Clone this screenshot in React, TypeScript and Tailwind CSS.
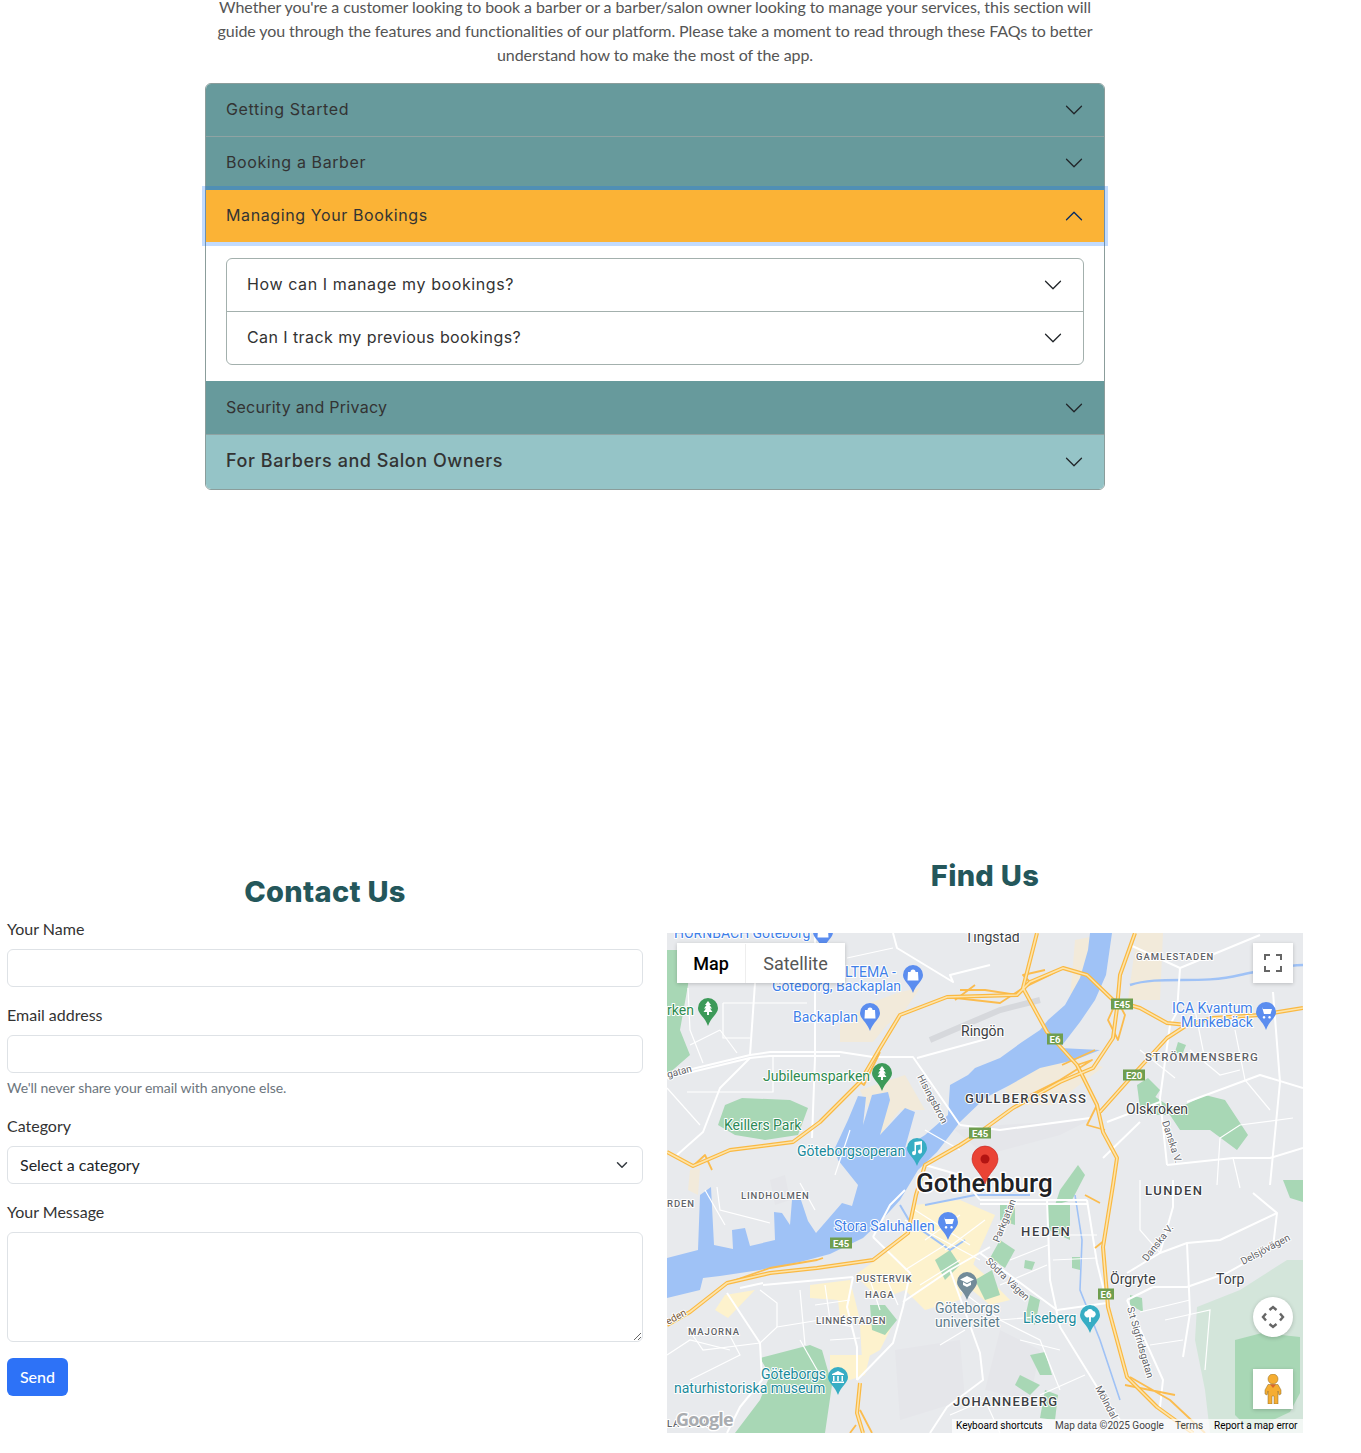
const headFont = "font-['Inter',sans-serif]";

function Chevron({ up, color = "#212529" }: { up?: boolean; color?: string }) {
  return (
    <svg width="20" height="20" viewBox="0 0 16 16" fill={color} className={up ? "shrink-0 rotate-180" : "shrink-0"}>
      <path fillRule="evenodd" d="M1.646 4.646a.5.5 0 0 1 .708 0L8 10.293l5.646-5.647a.5.5 0 0 1 .708.708l-6 6a.5.5 0 0 1-.708 0l-6-6a.5.5 0 0 1 0-.708z" />
    </svg>
  );
}

function Title({ children }: { children: React.ReactNode }) {
  return <span className={`${headFont} -mt-[2px] text-base tracking-[0.6px] text-[#333]`}>{children}</span>;
}

function Faq() {
  return (
    <div className="w-[900px] rounded-[6px] border border-[#8b9d9b] bg-white">
      <div className="flex h-[53px] items-center justify-between rounded-t-[5px] border-b border-[#8fa3a3] bg-[#679a9c] pl-5 pr-5">
        <Title>Getting Started</Title>
        <Chevron />
      </div>
      <div className="flex h-[53px] items-center justify-between bg-[#679a9c] pb-[2px] pl-5 pr-5">
        <Title>Booking a Barber</Title>
        <Chevron />
      </div>
      <div className="relative z-10 flex h-[52px] items-center justify-between bg-[#fbb336] pl-5 pr-5 shadow-[0_0_0_4px_rgba(13,110,253,0.25)]">
        <Title>Managing Your Bookings</Title>
        <Chevron up color="#052c65" />
      </div>
      <div className="px-5 py-4">
        <div className="rounded-[6px] border border-[#a3b0ad]">
          <div className="flex h-[53px] items-center justify-between border-b border-[#a3b0ad] pl-5 pr-5">
            <Title>How can I manage my bookings?</Title>
            <Chevron />
          </div>
          <div className="flex h-[52px] items-center justify-between pl-5 pr-5">
            <span className={`${headFont} -mt-[2px] text-base tracking-[0.42px] text-[#333]`}>Can I track my previous bookings?</span>
            <Chevron />
          </div>
        </div>
      </div>
      <div className="flex h-[54px] items-center justify-between border-b border-[#8fa3a3] bg-[#679a9c] pl-5 pr-5">
        <span className={`${headFont} -mt-[2px] text-base tracking-[0.25px] text-[#333]`}>Security and Privacy</span>
        <Chevron />
      </div>
      <div className="flex h-[54px] items-center justify-between rounded-b-[5px] bg-[#95c4c7] pl-5 pr-5">
        <span className={`${headFont} -mt-[2px] text-lg font-medium tracking-[0.55px] text-[#333]`}>For Barbers and Salon Owners</span>
        <Chevron />
      </div>
    </div>
  );
}

function Field({ label, children, help }: { label: string; children: React.ReactNode; help?: string }) {
  return (
    <div className="mb-4">
      <label className="mb-2 block text-base leading-6 text-[#333]">{label}</label>
      {children}
      {help && <div className="mt-1 text-sm leading-[21px] tracking-[-0.05px] text-[#6c757d]">{help}</div>}
    </div>
  );
}

function ContactForm() {
  return (
    <div className="mt-4">
      <h2 className={`${headFont} mb-[5px] text-center text-[29px] leading-10 font-extrabold tracking-[0.3px] text-[#24575b]`}>Contact Us</h2>
      <form>
        <Field label="Your Name">
          <input className="block h-[38px] w-full rounded-[6px] border border-[#dee2e6] bg-white" />
        </Field>
        <Field label="Email address" help="We'll never share your email with anyone else.">
          <input className="block h-[38px] w-full rounded-[6px] border border-[#dee2e6] bg-white" />
        </Field>
        <Field label="Category">
          <div className="flex h-[38px] items-center justify-between rounded-[6px] border border-[#dee2e6] bg-white pl-3 pr-3 text-base text-[#212529]">
            <span>Select a category</span>
            <svg width="16" height="12" viewBox="0 0 16 16" fill="none" stroke="#343a40" strokeWidth="2" strokeLinecap="round" strokeLinejoin="round">
              <path d="m2 5 6 6 6-6" />
            </svg>
          </div>
        </Field>
        <Field label="Your Message">
          <textarea className="block h-[110px] w-full rounded-[6px] border border-[#dee2e6] bg-white" />
        </Field>
        <button type="button" className="h-[38px] w-[61px] rounded-[6px] bg-[#2d72f7] text-base font-medium text-white">Send</button>
      </form>
    </div>
  );
}

const water = "M667 1258 L698 1250 L700 1195 L711 1187 L714 1245 L733 1249 L732 1230 L745 1228 L750 1246 L775 1240 L774 1212 L782 1213 L790 1225 L792 1200 L801 1200 L808 1221 L816 1233 L842 1203 L852 1206 L858 1185 L838 1160 L835 1148 L848 1120 L858 1096 L866 1097 L863 1125 L872 1095 L888 1092 L890 1100 L880 1135 L905 1108 L915 1112 L905 1148 L925 1135 L948 1115 L950 1085 L968 1075 L975 1068 L1000 1058 L1022 1042 L1040 1030 L1048 1020 L1065 1005 L1080 978 L1088 950 L1090 933 L1112 933 L1106 975 L1095 1000 L1080 1022 L1060 1048 L1100 1050 L1075 1060 L1040 1068 L1010 1085 L985 1098 L960 1122 L937 1152 L918 1170 L900 1200 L880 1222 L863 1238 L830 1254 L800 1262 L760 1270 L720 1276 L703 1278 L700 1290 L667 1298 Z";

const beige = [
  "M840 1025 L870 1003 L900 992 L920 988 L905 1010 L887 1025 L873 1042 L840 1042 Z",
  "M860 1090 L905 1075 L925 1110 L900 1110 L880 1135 Z",
  "M1137 933 L1163 933 L1160 1000 L1128 1000 Z",
  "M1075 940 L1095 936 L1085 985 L1070 1000 Z",
  "M1023 1068 L1070 1058 L1103 1067 L1053 1105 L1015 1105 L1005 1090 Z",
  "M690 1170 L700 1168 L698 1195 L688 1190 Z",
];

const yellow = [
  "M915 1205 L960 1200 L995 1215 L975 1260 L960 1300 L925 1310 L905 1290 L880 1300 L855 1275 L890 1250 L905 1230 Z",
  "M810 1285 L850 1280 L860 1320 L840 1318 L838 1300 L810 1298 Z",
  "M725 1295 L755 1290 L728 1318 L715 1310 Z",
  "M830 1355 L870 1355 L865 1375 L850 1380 L830 1375 Z",
  "M860 1325 L895 1320 L880 1350 L862 1360 Z",
  "M963 1255 L985 1275 L1010 1300 L990 1305 L960 1280 Z",
];

const blocks = [
  "M1000 1330 L1040 1350 L1030 1400 L985 1390 Z",
  "M895 1350 L960 1340 L965 1400 L900 1420 Z",
  "M955 1130 L1000 1125 L1090 1120 L1060 1135 L985 1155 Z",
  "M770 1180 L785 1175 L790 1200 L775 1205 Z",
];

const green = [
  "M667 950 L690 950 L688 985 L680 1030 L690 1055 L667 1075 Z",
  "M725 1105 L742 1098 L790 1100 L808 1108 L798 1135 L765 1140 L735 1135 L718 1125 Z",
  "M1145 1090 L1175 1110 L1205 1095 L1225 1100 L1248 1135 L1237 1150 L1210 1130 L1180 1130 L1170 1115 L1145 1115 Z",
  "M1137 1085 L1148 1078 L1160 1090 L1150 1105 L1140 1108 Z",
  "M1060 1190 L1078 1165 L1085 1175 L1072 1200 L1055 1205 Z",
  "M1048 1205 L1070 1205 L1070 1240 L1048 1230 Z",
  "M1000 1205 L1015 1205 L1015 1225 L1000 1220 Z",
  "M1025 1260 L1035 1262 L1032 1270 L1024 1268 Z",
  "M1072 1257 L1080 1257 L1080 1270 L1072 1268 Z",
  "M1000 1240 L1015 1250 L1005 1268 L990 1258 Z",
  "M935 1260 L950 1250 L960 1265 L945 1280 Z",
  "M1283 1180 L1303 1180 L1303 1202 L1290 1198 Z",
  "M760 1358 L810 1345 L822 1350 L832 1385 L825 1433 L735 1433 L760 1400 L770 1375 Z",
  "M870 1305 L885 1305 L897 1320 L885 1335 L872 1330 Z",
  "M1030 1355 L1045 1352 L1052 1375 L1040 1375 Z",
  "M1020 1375 L1040 1385 L1030 1395 L1015 1385 Z",
  "M1235 1340 L1262 1333 L1300 1337 L1300 1393 L1290 1412 L1273 1420 L1250 1430 L1235 1415 Z",
  "M1030 1295 L1040 1300 L1035 1325 L1025 1318 Z",
  "M1130 1295 L1142 1298 L1143 1312 L1130 1305 Z",
  "M1045 1390 L1058 1395 L1055 1420 L1040 1418 Z",
  "M1178 1042 L1186 1045 L1182 1055 L1175 1052 Z",
  "M975 1280 L992 1270 L1000 1295 L985 1300 Z",
];

const paleGreen = [
  "M1197 1307 L1240 1290 L1287 1260 L1303 1260 L1303 1433 L1210 1433 L1205 1390 L1195 1340 Z",
];

const roads = [
  "M667 1075 L750 1055 L770 1052 L840 1052 L873 1057 L913 1057 L960 1125",
  "M667 1078 L750 1058 L770 1056 L840 1056",
  "M750 1055 L755 983",
  "M815 933 L815 1058 L812 1138",
  "M750 1058 L720 1088 L703 1132 L677 1155",
  "M893 933 L897 948 L953 982 L950 975 L990 965",
  "M917 1058 L990 1038",
  "M1130 945 L1180 968 L1260 935",
  "M1180 968 L1177 1012 L1170 1025 L1160 1098 L1167 1165",
  "M1273 992 L1280 1082 L1270 1185",
  "M1187 1102 L1260 1075 L1303 1088",
  "M1107 1122 L1160 1102",
  "M1140 1122 L1103 1158",
  "M1167 1165 L1233 1158 L1270 1158 L1303 1148",
  "M1047 1200 L1050 1280 L1060 1327 L1097 1387 L1120 1420",
  "M980 1200 L1087 1200",
  "M980 1204 L1087 1204",
  "M1087 1200 L1097 1263 L1107 1303",
  "M980 1253 L1057 1310 L1107 1303",
  "M1153 1287 L1187 1287 L1227 1273 L1273 1247 L1277 1213 L1253 1193",
  "M1127 1300 L1153 1287",
  "M1127 1273 L1160 1253 L1173 1207 L1173 1180",
  "M1160 1253 L1187 1243 L1220 1240 L1277 1213",
  "M1187 1243 L1190 1313 L1183 1357",
  "M1127 1300 L1163 1380 L1160 1407",
  "M727 1293 L760 1343 L762 1380 L740 1407 L727 1433",
  "M763 1285 L853 1277",
  "M740 1288 L763 1283",
  "M853 1277 L847 1307 L857 1347 L857 1380",
  "M857 1380 L893 1343 L903 1307 L910 1273 L873 1237",
  "M903 1302 L950 1270 L990 1247",
  "M950 1270 L980 1353 L983 1380 L947 1407 L930 1433",
  "M980 1200 L960 1175 L925 1165",
  "M873 1237 L890 1205 L905 1190",
  "M960 1125 L1000 1130 L1090 1118",
];

const thinRoads = [
  "M688 988 L690 1030 L703 1063",
  "M720 1030 L737 1053",
  "M720 1030 L690 1045",
  "M723 1003 L807 1003",
  "M723 1003 L723 1038 L750 1038",
  "M667 1088 L700 1125",
  "M687 1092 L773 1092 L773 1056",
  "M847 958 L893 948",
  "M1140 1050 L1175 1078",
  "M1190 1050 L1220 1075 L1240 1070",
  "M1195 1010 L1205 1060",
  "M1235 1030 L1245 1080 L1270 1110",
  "M1293 1118 L1240 1125 L1220 1138 L1217 1185",
  "M1233 1158 L1240 1188",
  "M717 1187 L720 1210 L770 1223",
  "M777 1327 L777 1303 L760 1290",
  "M760 1343 L777 1327 L820 1320 L853 1327",
  "M687 1327 L703 1350 L760 1343",
  "M800 1290 L805 1345",
  "M825 1285 L830 1320",
  "M815 1305 L850 1300",
  "M830 1340 L860 1338",
  "M870 1280 L880 1310 M885 1275 L898 1305",
  "M905 1220 L980 1260 M915 1210 L970 1245",
  "M925 1240 L960 1215 M945 1250 L985 1220",
  "M920 1285 L960 1260 M905 1270 L945 1245",
  "M960 1290 L1000 1320 L1060 1315",
  "M1000 1320 L1040 1340 L1060 1390",
  "M1010 1260 L1048 1245",
  "M1000 1285 L1047 1265",
  "M1060 1235 L1097 1235",
  "M1053 1260 L1097 1258",
  "M1140 1180 L1140 1230 L1160 1253",
  "M1140 1312 L1190 1300",
  "M1165 1320 L1210 1310 L1205 1370",
  "M1040 1395 L1085 1375",
  "M1150 1345 L1183 1340",
  "M950 1415 L985 1400 L1000 1433",
  "M1020 1340 L1060 1350",
  "M940 1345 L965 1330",
  "M667 1355 L690 1340 L730 1350",
  "M690 1380 L740 1355 L727 1330",
  "M800 1340 L820 1375",
  "M705 1190 L725 1225",
  "M800 1183 L815 1210",
  "M850 1130 L835 1175",
  "M925 1130 L960 1150",
];

const highways = [
  "M667 1152 L693 1166 L730 1150 L793 1142 L820 1122 L860 1082 L880 1048 L900 1015 L947 997 L1017 995 L1030 982 L1063 968 L1087 975 L1113 1000 L1140 1008 L1167 1023 L1187 1025 L1213 1018 L1260 1015 L1303 1008",
  "M1037 933 L1023 988 L1047 1032 L1077 1065 L1097 1105 L1103 1132 L1117 1158 L1113 1185 L1103 1247 L1108 1307 L1127 1377 L1157 1407 L1193 1433",
  "M1135 933 L1120 975 L1117 1008 L1113 1038 L1093 1068 L1060 1082 L1013 1108 L980 1132 L960 1145 L925 1165 L916 1195 L908 1233 L873 1260 L817 1268 L770 1273 L727 1283 L690 1312 L667 1325",
  "M1100 1112 L1133 1075 L1167 1038 L1187 1025",
  "M860 1383 L857 1413 L863 1433",
];

const ramps = [
  "M727 1283 L770 1268 L817 1260 L823 1258",
  "M947 997 L1000 1003 L1023 988 L1050 975 L1063 968",
  "M960 990 L985 990 L1017 995 M955 1000 L975 985",
  "M1030 982 L1023 975 L1045 970",
  "M1117 1000 L1108 1020 L1118 1040 L1125 1015 L1117 1000",
  "M1077 1065 L1092 1060 L1060 1080 L1030 1095 M1062 1065 L1095 1050",
  "M1097 1105 L1087 1125 L1105 1130",
  "M1130 1377 L1170 1400 L1205 1433 M1125 1385 L1175 1395",
  "M1100 1203 L1085 1195 M1105 1240 L1095 1248",
  "M860 1082 L864 1085 L880 1052 M693 1166 L705 1155 L712 1170",
  "M860 1410 L872 1433 M856 1425 L850 1433",
];

const shields = [
  { label: "E45", x: 1122, y: 1004, w: 22 },
  { label: "E6", x: 1055, y: 1039, w: 16 },
  { label: "E20", x: 1134, y: 1075, w: 22 },
  { label: "E45", x: 980, y: 1133, w: 22 },
  { label: "E45", x: 841, y: 1243, w: 22 },
  { label: "E6", x: 1106, y: 1294, w: 16 },
];

const BLUE = "#3f7fe8";
const GREEN = "#2e8b4f";
const TEAL = "#1a8a9b";
const GREY = "#5f6368";
const DARK = "#3c4043";

type Label = { t: string; x: number; y: number; c: string; s?: number; w?: number; ls?: number; r?: number };

const labels: Label[] = [
  { t: "HORNBACH Göteborg", x: 674, y: 938, c: BLUE, s: 14 },
  { t: "Tingstad", x: 965, y: 942, c: DARK, s: 14 },
  { t: "GAMLESTADEN", x: 1136, y: 960, c: GREY, s: 9.5, w: 500, ls: 1 },
  { t: "LTEMA -", x: 845, y: 977, c: BLUE, s: 14 },
  { t: "Göteborg, Backaplan", x: 772, y: 991, c: BLUE, s: 14 },
  { t: "rken", x: 667, y: 1015, c: GREEN, s: 14 },
  { t: "Backaplan", x: 793, y: 1022, c: BLUE, s: 14 },
  { t: "Ringön", x: 961, y: 1036, c: DARK, s: 14 },
  { t: "ICA Kvantum", x: 1172, y: 1013, c: BLUE, s: 14 },
  { t: "Munkebäck", x: 1181, y: 1027, c: BLUE, s: 14 },
  { t: "STRÖMMENSBERG", x: 1145, y: 1061, c: GREY, s: 11.5, w: 500, ls: 1.1 },
  { t: "gatan", x: 668, y: 1078, c: GREY, s: 10, r: -15 },
  { t: "Jubileumsparken", x: 763, y: 1081, c: GREEN, s: 14 },
  { t: "Hisingsbron", x: 917, y: 1077, c: GREY, s: 10, r: 62 },
  { t: "GULLBERGSVASS", x: 965, y: 1103, c: DARK, s: 13, w: 500, ls: 1.4 },
  { t: "Olskroken", x: 1126, y: 1114, c: DARK, s: 14 },
  { t: "Keillers Park", x: 724, y: 1130, c: "#2d8a57", s: 14 },
  { t: "Göteborgsoperan", x: 797, y: 1156, c: TEAL, s: 14 },
  { t: "Danska V.", x: 1162, y: 1122, c: GREY, s: 10, r: 72 },
  { t: "LUNDEN", x: 1145, y: 1195, c: DARK, s: 13, w: 500, ls: 1.5 },
  { t: "LINDHOLMEN", x: 741, y: 1199, c: GREY, s: 9.5, w: 500, ls: 0.9 },
  { t: "RDEN", x: 667, y: 1207, c: GREY, s: 9.5, w: 500, ls: 0.9 },
  { t: "Stora Saluhallen", x: 834, y: 1231, c: BLUE, s: 14 },
  { t: "HEDEN", x: 1021, y: 1236, c: DARK, s: 13, w: 500, ls: 1.8 },
  { t: "Parkgatan", x: 999, y: 1243, c: GREY, s: 10, r: -68 },
  { t: "Danska V.", x: 1147, y: 1262, c: GREY, s: 10, r: -52 },
  { t: "Delsjövägen", x: 1243, y: 1265, c: GREY, s: 10, r: -28 },
  { t: "PUSTERVIK", x: 856, y: 1282, c: GREY, s: 9.5, w: 500, ls: 0.7 },
  { t: "Södra Vägen", x: 985, y: 1262, c: GREY, s: 10, r: 44 },
  { t: "Örgryte", x: 1110, y: 1284, c: DARK, s: 14 },
  { t: "Torp", x: 1216, y: 1284, c: DARK, s: 14 },
  { t: "HAGA", x: 865, y: 1298, c: GREY, s: 9.5, w: 500, ls: 0.9 },
  { t: "Göteborgs", x: 935, y: 1313, c: "#5f7d8c", s: 14 },
  { t: "universitet", x: 935, y: 1327, c: "#5f7d8c", s: 14 },
  { t: "Liseberg", x: 1023, y: 1323, c: TEAL, s: 14 },
  { t: "S:t Sigfridsgatan", x: 1127, y: 1308, c: GREY, s: 10, r: 74 },
  { t: "LINNÉSTADEN", x: 816, y: 1324, c: GREY, s: 9.5, w: 500, ls: 0.7 },
  { t: "MAJORNA", x: 688, y: 1335, c: GREY, s: 9.5, w: 500, ls: 0.9 },
  { t: "eden", x: 668, y: 1325, c: "#7a5a3a", s: 10, r: -28 },
  { t: "Göteborgs", x: 761, y: 1379, c: TEAL, s: 14 },
  { t: "naturhistoriska museum", x: 674, y: 1393, c: TEAL, s: 14 },
  { t: "JOHANNEBERG", x: 953, y: 1406, c: DARK, s: 13, w: 500, ls: 1.15 },
  { t: "Mölndal", x: 1095, y: 1388, c: GREY, s: 10, r: 62 },
  { t: "LADUGÅRD", x: 667, y: 1427, c: GREY, s: 9.5, w: 500, ls: 0.9 },
];

const tree = "M0 -7 L-3 -3 L-1.5 -3 L-4 0.5 L-2 0.5 L-4.5 4 L-1 4 L-1 7 L1 7 L1 4 L4.5 4 L2 0.5 L4 0.5 L1.5 -3 L3 -3 Z";
const bag = "M-5 -3 L-2.5 -3 a2.5 2.5 0 0 1 5 0 L5 -3 L5.5 5.5 L-5.5 5.5 Z";
const cart = "M-6 -5 L-4 -5 L-3 -3 L6 -3 L4.5 2 L-2 2 L-4 -5 Z M-2 4 a1.3 1.3 0 1 0 0.1 0 Z M3.5 4 a1.3 1.3 0 1 0 0.1 0 Z";
const note = "M-2.5 -6 L5 -7 L5 3.5 a2 2 0 1 1 -1.5 -1.8 L3.5 -3.5 L-1 -2.8 L-1 5 a2 2 0 1 1 -1.5 -1.8 Z";
const cap = "M0 -6 L7 -2.5 L0 1 L-7 -2.5 Z M-4 0 L0 2.2 L4 0 L4 3 L0 5 L-4 3 Z";
const museum = "M0 -6 L6 -3 L6 -2 L-6 -2 L-6 -3 Z M-5 -1 L-3.5 -1 L-3.5 4 L-5 4 Z M-.8 -1 L.8 -1 L.8 4 L-.8 4 Z M3.5 -1 L5 -1 L5 4 L3.5 4 Z M-6 4.5 L6 4.5 L6 6 L-6 6 Z";
const parkTree = "M0 -6 a3 3 0 0 1 3 2 a3 3 0 0 1 2 5 a3 3 0 0 1 -4 1 L.8 7 L-.8 7 L-1 2 a3 3 0 0 1 -4 -1 a3 3 0 0 1 2 -5 a3 3 0 0 1 3 -2 Z";

const pins = [
  { x: 823, y: 932, c: "#5b8def", d: bag },
  { x: 913, y: 975, c: "#5b8def", d: bag },
  { x: 708, y: 1008, c: "#3d9a59", d: tree },
  { x: 870, y: 1013, c: "#5b8def", d: bag },
  { x: 882, y: 1073, c: "#3d9a59", d: tree },
  { x: 917, y: 1148, c: "#37adc4", d: note },
  { x: 1266, y: 1012, c: "#5b8def", d: cart },
  { x: 948, y: 1222, c: "#5b8def", d: cart },
  { x: 967, y: 1282, c: "#728b99", d: cap },
  { x: 1090, y: 1315, c: "#37adc4", d: parkTree },
  { x: 838, y: 1377, c: "#37adc4", d: museum },
];

function Pin({ x, y, c, d }: { x: number; y: number; c: string; d: string }) {
  return (
    <g transform={`translate(${x} ${y})`}>
      <path d="M-10 0 A10 10 0 1 1 10 0 C10 6 3 9 0 18 C-3 9 -10 6 -10 0 Z" fill={c} />
      <path d={d} fill="#fff" />
    </g>
  );
}

function MapDrawing() {
  return (
    <svg viewBox="667 933 636 500" className="block h-full w-full" fontFamily="Roboto, sans-serif">
      <rect x="667" y="933" width="636" height="500" fill="#e8eaed" />
      {blocks.map((d) => <path key={d} d={d} fill="#e5e6ea" />)}
      {paleGreen.map((d) => <path key={d} d={d} fill="#d3e5da" />)}
      {beige.map((d) => <path key={d} d={d} fill="#f2eada" />)}
      {yellow.map((d) => <path key={d} d={d} fill="#fdf2cd" />)}
      {green.map((d) => <path key={d} d={d} fill="#a8d7b5" />)}
      <path d={water} fill="#9fc2f6" />
      <path d="M1130 985 C1160 975 1200 985 1240 975 C1265 970 1285 965 1303 965" fill="none" stroke="#9fc2f6" strokeWidth="2.5" />
      <path d="M1075 1195 L1082 1240 L1080 1290 L1100 1340 L1120 1400" fill="none" stroke="#9fc2f6" strokeWidth="1.6" />
      <path d="M900 1205 L910 1222 L950 1250 L965 1240 M925 1205 L975 1195 L1030 1195" fill="none" stroke="#9fc2f6" strokeWidth="2" />
      <path d="M930 1040 L1000 1010 L1040 1000" fill="none" stroke="#d6d8dc" strokeWidth="6" />
      {thinRoads.map((d) => <path key={d} d={d} fill="none" stroke="#fff" strokeWidth="1.2" />)}
      {roads.map((d) => <path key={d} d={d} fill="none" stroke="#fff" strokeWidth="2" strokeLinejoin="round" />)}
      {ramps.map((d) => <path key={d} d={d} fill="none" stroke="#fbbc4e" strokeWidth="1.8" strokeLinejoin="round" />)}
      {highways.map((d) => <path key={d} d={d} fill="none" stroke="#fab942" strokeWidth="4" strokeLinejoin="round" />)}
      {highways.map((d) => <path key={d + "i"} d={d} fill="none" stroke="#fde4ab" strokeWidth="1.6" strokeLinejoin="round" />)}
      {shields.map((s) => (
        <g key={s.x}>
          <rect x={s.x - s.w / 2} y={s.y - 5.5} width={s.w} height="11" fill="#6f9e4f" />
          <text x={s.x} y={s.y + 3.5} textAnchor="middle" fontSize="9.5" fontWeight="700" fill="#fff">{s.label}</text>
        </g>
      ))}
      {pins.map((p) => <Pin key={p.x} {...p} />)}
      {labels.map((l) => (
        <text
          key={l.t + l.x}
          x={l.x}
          y={l.y}
          fill={l.c}
          fontSize={l.s}
          fontWeight={l.w ?? 400}
          letterSpacing={l.ls}
          transform={l.r ? `rotate(${l.r} ${l.x} ${l.y})` : undefined}
          stroke="#fff"
          strokeWidth="2"
          strokeLinejoin="round"
          paintOrder="stroke"
        >
          {l.t}
        </text>
      ))}
      <text x="916" y="1192" fontSize="26" fontWeight="500" fill="#202124" stroke="#fff" strokeWidth="3" strokeLinejoin="round" paintOrder="stroke">Gothenburg</text>
      <g transform="translate(985 1159)">
        <path d="M-13 0 A13 13 0 1 1 13 0 C13 9 3 14 0 25 C-3 14 -13 9 -13 0 Z" fill="#ea4335" stroke="#c5221f" strokeWidth="0.6" />
        <circle r="4.5" fill="#b31412" />
      </g>
      <text x="676" y="1426" fontFamily="'Open Sans', sans-serif" fontSize="18" fontWeight="700" letterSpacing="-0.8" fill="#a9acb0" stroke="#fff" strokeWidth="2.6" strokeLinejoin="round" paintOrder="stroke">Google</text>
    </svg>
  );
}

function MapView() {
  return (
    <div className="relative h-[500px] w-full overflow-hidden font-['Roboto',sans-serif]">
      <MapDrawing />
      <div className="absolute top-[10px] left-[10px] flex h-10 bg-white pt-px text-lg shadow-[0_1px_4px_rgba(0,0,0,0.2)]">
        <div className="flex w-[69px] items-center justify-center border-r border-[#eee] font-medium text-black">Map</div>
        <div className="flex w-[99px] items-center justify-center text-[#565656]">Satellite</div>
      </div>
      <div className="absolute top-[10px] right-[10px] flex h-10 w-10 items-center justify-center bg-white shadow-[0_1px_4px_rgba(0,0,0,0.2)]">
        <svg width="18" height="18" viewBox="0 0 18 18" fill="#666">
          <path d="M0 0h6v2H2v4H0zM12 0h6v6h-2V2h-4zM0 12h2v4h4v2H0zM16 12h2v6h-6v-2h4z" />
        </svg>
      </div>
      <div className="absolute right-[10px] bottom-[96px] flex h-10 w-10 items-center justify-center rounded-full bg-white shadow-[0_1px_4px_rgba(0,0,0,0.2)]">
        <svg width="24" height="24" viewBox="0 0 24 24" fill="none" stroke="#666" strokeWidth="2.4">
          <path d="M8.5 5 12 2l3.5 3M8.5 19 12 22l3.5-3M5 8.5 2 12l3 3.5M19 8.5l3 3.5-3 3.5" />
        </svg>
      </div>
      <div className="absolute right-[10px] bottom-[24px] flex h-10 w-10 items-center justify-center bg-white shadow-[0_1px_4px_rgba(0,0,0,0.2)]">
        <svg width="18" height="30" viewBox="0 0 18 30" fill="#f5ad32" stroke="#8a6a2a" strokeWidth="0.5">
          <circle cx="9" cy="5" r="5" />
          <path d="M4 10.5h10l3 5.5 0 4-2 1-1-4 0 13h-4v-8h-2v8H4V17l-1 4-2-1 0-4z" />
          <path d="M6 10.5h6L9 14z" fill="#d9662d" stroke="none" />
        </svg>
      </div>
      <div className="absolute right-0 bottom-0 flex h-[14px] items-center bg-white/70 text-[10px] leading-[14px] text-black">
        <span className="w-[99px] pl-[4px] whitespace-nowrap">Keyboard shortcuts</span>
        <span className="w-[119px] pl-[4px] whitespace-nowrap text-[#444]">Map data ©2025 Google</span>
        <span className="w-[43px] pl-[5px] text-[#444]">Terms</span>
        <span className="w-[90px] pl-[1px] pr-[7px] whitespace-nowrap">Report a map error</span>
      </div>
    </div>
  );
}

export default function App() {
  return (
    <div className="-mt-[5px] bg-white pb-5 font-['Lato',sans-serif]">
      <div className="pl-[205px]">
        <p className="mb-4 w-[900px] text-center text-base leading-6 tracking-[-0.08px] text-[#555]">
          Whether you're a customer looking to book a barber or a barber/salon owner looking to manage your services, this section will guide you through the features and functionalities of our platform. Please take a moment to read through these FAQs to better understand how to make the most of the app.
        </p>
        <Faq />
      </div>
      <section className="mt-[366px] grid grid-cols-[636px_636px] items-start gap-x-6 pl-[7px]">
        <ContactForm />
        <div>
          <h2 className={`${headFont} mb-[37px] text-center text-[29px] leading-10 font-extrabold tracking-[0.3px] text-[#24575b]`}>Find Us</h2>
          <MapView />
        </div>
      </section>
    </div>
  );
}
